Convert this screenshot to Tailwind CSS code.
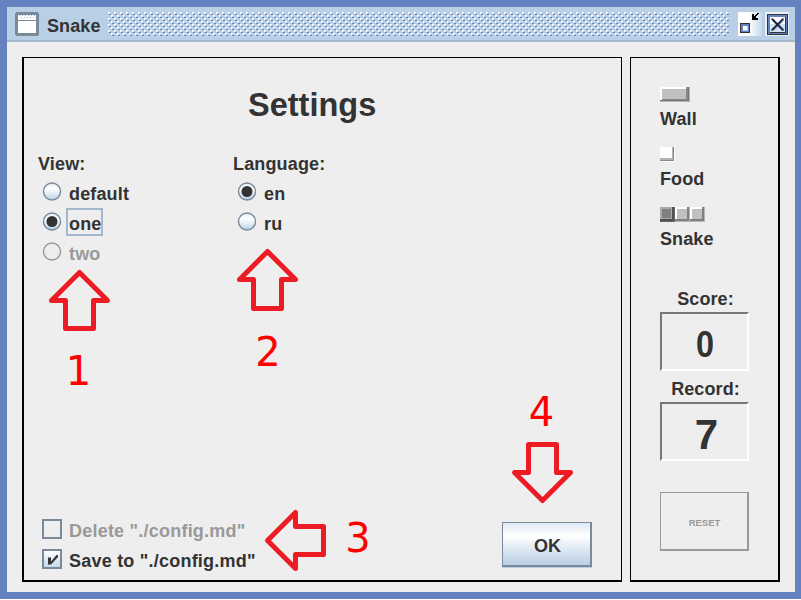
<!DOCTYPE html>
<html lang="en">
<head>
<meta charset="utf-8">
<title>Snake</title>
<script src="https://cdn.jsdelivr.net/npm/@tailwindcss/browser@4"></script>
</head>
<body class="bg-white">
<div class="relative flex h-[599px] w-[801px] flex-col overflow-hidden border-t-7 border-r-6 border-b-7 border-l-7 border-[#6382bf] bg-[#eee] font-['Liberation_Sans',Arial,sans-serif] text-[18px] font-bold text-[#333]">
  <header class="flex h-[35px] shrink-0 items-start border-b-2 border-[#a3b8cc] bg-[#b8cfe5] pt-[5px] pl-2">
    <svg class="h-6 w-6 shrink-0" viewBox="0 0 24 24" shape-rendering="crispEdges">
      <path d="M1 0h22v1h1v22h-1v1H1v-1H0V1h1z" fill="#7a8a99"/>
      <rect x="3" y="3" width="18" height="18" fill="#fff"/>
      <path d="M3 8.500H21" stroke="#7a8a99"/>
      <path d="M4 3.500H21M6 5.500H20" stroke="#a3b4e0" stroke-dasharray="1 2"/>
    </svg>
    <div class="flex h-[26px] w-[69px] items-center pt-0.5 pl-2 tracking-[0.1px]">Snake</div>
    <svg class="h-6 w-[621px] shrink-0" shape-rendering="crispEdges">
      <defs><pattern id="bumps" width="6" height="6" patternUnits="userSpaceOnUse">
        <path d="M0 0h2v1h-2zM0 1h1v1h-1zM3 3h2v1h-2zM3 4h1v1h-1z" fill="#fff"/>
        <path d="M1 2h2v1h-2zM4 5h2v1h-2z" fill="#6382bf"/>
      </pattern></defs>
      <rect width="621" height="24" fill="url(#bumps)"/>
    </svg>
    <svg class="ml-[9px] h-6 w-6 shrink-0" viewBox="0 0 24 24" shape-rendering="crispEdges">
      <defs><linearGradient id="tb" x2="1" y2="0"><stop stop-color="#fff"/><stop offset=".45" stop-color="#fff"/><stop offset="1" stop-color="#c5d9eb"/></linearGradient></defs>
      <rect width="24" height="24" fill="url(#tb)"/>
      <rect x="2" y="11" width="10" height="10" fill="#333"/><rect x="3" y="12" width="8" height="8" fill="#6382bf"/>
      <rect x="5" y="14" width="5" height="5" fill="#b8cfe5"/><rect x="5" y="14" width="4" height="4" fill="#fff"/>
      <path d="M14 2h2v4h4v2h-6zM16 4h2v2h-2zM17 3h2v1h-2zM18 2h2v1h-2zM19 1h2v1h-2z" fill="#000"/>
    </svg>
    <svg class="ml-[3px] h-6 w-6 shrink-0" viewBox="0 0 24 24">
      <g shape-rendering="crispEdges">
        <rect width="24" height="24" fill="#e7f0f8"/>
        <rect x="2" y="2" width="21" height="21" fill="#333"/><rect x="3" y="3" width="19" height="19" fill="#6382bf"/>
        <rect x="5" y="5" width="16" height="16" fill="#333"/><rect x="5" y="5" width="15" height="15" fill="#d3e2f0"/><rect x="5" y="5" width="15" height="7" fill="#fff"/>
      </g>
      <path d="M7.500 7.500L18 18M18 7.500L7.500 18" stroke="#6382bf" stroke-width="2.600"/>
      <path d="M6.500 6.500L18.500 18.500M18.500 6.500L6.500 18.500" stroke="#111" stroke-width="1.300"/>
    </svg>
  </header>

  <main class="flex flex-1 gap-2 pt-[15px] pr-[15px] pb-[10px] pl-[15px]">
    <section class="flex w-[600px] shrink-0 flex-col border-t border-r border-b-2 border-l-2 border-black">
      <h1 class="h-[91px] pt-[27px] pl-[224px] text-[32.500px] leading-[40px]">Settings</h1>
      <div class="flex pl-[14px] tracking-[0.15px]">
        <fieldset class="w-[195px]">
          <legend class="h-[30px] leading-[30px]">View:</legend>
          <label class="flex h-[30px] items-center pl-1">
            <svg class="mb-1 h-5 w-5" viewBox="0 0 20 20"><defs><linearGradient id="ocean" x2="0" y2="1"><stop stop-color="#dde8f3"/><stop offset=".3" stop-color="#fff"/><stop offset=".5" stop-color="#eff5fa"/><stop offset="1" stop-color="#b8cfe5"/></linearGradient></defs><circle cx="10" cy="9.500" r="8.500" fill="url(#ocean)" stroke="#7a8a99" stroke-width="1.400"/></svg>
            <span class="ml-[7px]">default</span>
          </label>
          <label class="flex h-[30px] items-center pl-1">
            <svg class="mb-1 h-5 w-5" viewBox="0 0 20 20"><circle cx="10" cy="9.500" r="8.500" fill="url(#ocean)" stroke="#7a8a99" stroke-width="1.400"/><circle cx="10" cy="9.500" r="5.500" fill="#333"/></svg>
            <span class="mb-1 ml-1 flex h-7 w-[37px] items-center border-2 border-[#a3b8cc] pt-1 pl-px">one</span>
          </label>
          <label class="flex h-[30px] items-center pl-1 text-[#999]">
            <svg class="mb-1 h-5 w-5" viewBox="0 0 20 20"><circle cx="10" cy="9.500" r="8.500" fill="none" stroke="#999" stroke-width="1.400"/></svg>
            <span class="ml-[7px]">two</span>
          </label>
        </fieldset>
        <fieldset>
          <legend class="h-[30px] leading-[30px]">Language:</legend>
          <label class="flex h-[30px] items-center pl-1">
            <svg class="mb-1 h-5 w-5" viewBox="0 0 20 20"><circle cx="10" cy="9.500" r="8.500" fill="url(#ocean)" stroke="#7a8a99" stroke-width="1.400"/><circle cx="10" cy="9.500" r="5.500" fill="#333"/></svg>
            <span class="ml-[7px]">en</span>
          </label>
          <label class="flex h-[30px] items-center pl-1">
            <svg class="mb-1 h-5 w-5" viewBox="0 0 20 20"><circle cx="10" cy="9.500" r="8.500" fill="url(#ocean)" stroke="#7a8a99" stroke-width="1.400"/></svg>
            <span class="ml-[7px]">ru</span>
          </label>
        </fieldset>
      </div>
      <div class="mt-auto flex items-end justify-between pr-[29px] pl-[18px]">
        <div class="pb-[5px] tracking-[0.22px]">
          <label class="flex h-[30px] items-center text-[#999]"><span class="mr-[7px] mb-[3px] h-5 w-5 border-2 border-[#7a8a99]"></span><span class="pt-[3px]">Delete "./config.md"</span></label>
          <label class="flex h-[30px] items-center">
            <span class="mr-[7px] mb-[3px] h-5 w-5 border-2 border-[#7a8a99] bg-linear-to-b from-white to-[#c5d9eb]">
              <svg class="h-4 w-4" viewBox="0 0 16 16"><path d="M4 6.500h3v4L12.500 4H14v2L7 13.500H4z" fill="#333"/></svg>
            </span><span class="pt-[3px]">Save to "./config.md"</span>
          </label>
        </div>
        <button class="mb-[13px] h-[45px] w-[90px] border-t border-r-2 border-b-2 border-l border-[#7a8a99] bg-linear-to-b from-[#dde8f3] via-white via-30% to-[#b8cfe5] pt-[4px] pl-[2px] shadow-[0_1px_0_#b8cfe5]">OK</button>
      </div>
    </section>

    <aside class="flex w-[150px] shrink-0 flex-col border-t border-r-2 border-b-2 border-l border-black pt-[28px] pl-[29px] tracking-[0.1px]">
      <svg class="h-[18px] w-[30px]" viewBox="0 0 30 18" shape-rendering="crispEdges"><path d="M0 1h30v15H0z" fill="#b5b5b5"/><path d="M0 1h29v14H0z" fill="#777"/><path d="M0 1h28v13H0z" fill="#888"/><path d="M0 1h26v2H2v11H0z" fill="#fff"/><path d="M2 3h24v10H2z" fill="#c0c0c0"/></svg>
      <p class="h-[42px] leading-[30px]">Wall</p>
      <svg class="h-[18px] w-[15px]" viewBox="0 0 15 18" shape-rendering="crispEdges"><path d="M0 1h15v15H0z" fill="#fff"/><path d="M0 1h14v14H0z" fill="#888"/><path d="M0 1h13v13H0z" fill="#b2b2b2"/><path d="M0 1h12v11H0z" fill="#fff"/></svg>
      <p class="h-[42px] leading-[30px]">Food</p>
      <svg class="h-[18px] w-[45px]" viewBox="0 0 45 18" shape-rendering="crispEdges">
        <path d="M0 1h15v15H0z" fill="#666"/><path d="M0 1h14v14H0z" fill="#505050"/><path d="M0 1h12v12H0z" fill="#aaa"/><path d="M2 3h9v9H2z" fill="#808080"/>
        <g id="seg"><path d="M15 1h15v15H15z" fill="#b5b5b5"/><path d="M15 1h14v14H15z" fill="#808080"/><path d="M15 1h12v12H15z" fill="#fff"/><path d="M17 3h10v10H17z" fill="#c0c0c0"/></g>
        <use href="#seg" x="15"/>
      </svg>
      <p class="h-[42px] leading-[30px]">Snake</p>
      <p class="mt-[18px] h-[28px] w-[91px] text-center leading-[30px]">Score:</p>
      <div class="flex h-[59px] w-[89px] items-center justify-center border-2 border-t-[#777] border-r-white border-b-white border-l-[#777] pt-1.5 pl-px text-[36px]"><span class="scale-x-90">0</span></div>
      <p class="mt-[3px] h-[28px] w-[91px] text-center leading-[30px]">Record:</p>
      <div class="flex h-[59px] w-[89px] items-center justify-center border-2 border-t-[#777] border-r-white border-b-white border-l-[#777] pt-1.5 pl-1 text-[42px]">7</div>
      <button class="mt-[31px] h-[59px] w-[89px] border-t border-r-2 border-b-2 border-l border-[#999] pt-1 pl-px text-[9.500px] font-bold tracking-normal text-[#999]">RESET</button>
    </aside>
  </main>

  <svg class="absolute -top-[7px] -left-[7px] h-[600px] w-[801px] font-['DejaVu_Sans',sans-serif] font-normal" viewBox="0 0 801 600" fill="none" stroke="#ed1c24" stroke-width="5" stroke-linejoin="round">
    <path d="M79.500 272.500L107.500 300.500H93.500V328.500H65.500V300.500H51.500Z"/>
    <path d="M267.500 251.500L295.500 279.500H281.500V308.500H253.500V279.500H239.500Z"/>
    <path d="M267.500 540.500L295.500 512.500V526.500H323.500V554.500H295.500V568.500Z"/>
    <path d="M542.500 500.500L514.500 472.500H528.500V444.500H556.500V472.500H570.500Z"/>
    <g fill="#f00" stroke="none" font-size="40" text-anchor="middle"><text x="78.500" y="385">1</text><text x="268" y="366">2</text><text x="358" y="552">3</text><text x="541.500" y="426">4</text></g>
  </svg>
</div>
</body>
</html>
